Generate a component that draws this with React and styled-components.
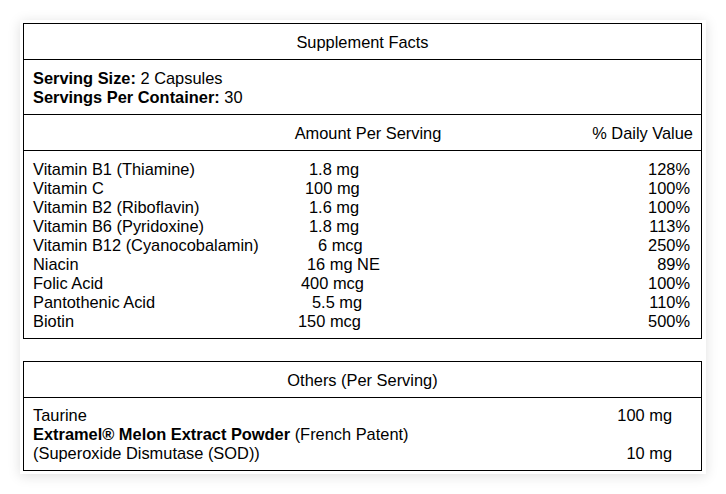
import styled, { createGlobalStyle } from 'styled-components';

const GlobalStyle = createGlobalStyle`
	html, body {
		margin: 0;
		padding: 0;
		background: #ffffff;
	}
	body {
		font-family: 'Liberation Sans', Arial, sans-serif;
		font-size: 16.4px;
		color: #000;
	}
`;

const vitamins = [
	{ name: 'Vitamin B1 (Thiamine)', amount: '1.8 mg', indent: 16, dv: '128%' },
	{ name: 'Vitamin C', amount: '100 mg', indent: 12, dv: '100%' },
	{ name: 'Vitamin B2 (Riboflavin)', amount: '1.6 mg', indent: 16, dv: '100%' },
	{ name: 'Vitamin B6 (Pyridoxine)', amount: '1.8 mg', indent: 16, dv: '113%' },
	{ name: 'Vitamin B12 (Cyanocobalamin)', amount: '6 mcg', indent: 25, dv: '250%' },
	{ name: 'Niacin', amount: '16 mg NE', indent: 14, dv: '89%' },
	{ name: 'Folic Acid', amount: '400 mcg', indent: 8, dv: '100%' },
	{ name: 'Pantothenic Acid', amount: '5.5 mg', indent: 19, dv: '110%' },
	{ name: 'Biotin', amount: '150 mcg', indent: 5, dv: '500%' },
];

const App = () => {
	return (
		<>
			<GlobalStyle />
			<Page>
				<Card>
					<Table>
						<TitleRow>Supplement Facts</TitleRow>
						<Block>
							<Line>
								<b>Serving Size:</b> 2 Capsules
							</Line>
							<Line>
								<b>Servings Per Container:</b> 30
							</Line>
						</Block>
						<HeadRow>
							<span />
							<HeadAmount>Amount Per Serving</HeadAmount>
							<HeadDv>% Daily Value</HeadDv>
						</HeadRow>
						<Block>
							{vitamins.map((v) => (
								<NutrientRow key={v.name}>
									<span>{v.name}</span>
									<Amount $indent={v.indent}>{v.amount}</Amount>
									<Dv>{v.dv}</Dv>
								</NutrientRow>
							))}
						</Block>
					</Table>

					<Table $spaced>
						<TitleRow>Others (Per Serving)</TitleRow>
						<OtherBlock>
							<OtherRow>
								<span>Taurine</span>
								<OtherValue>100 mg</OtherValue>
							</OtherRow>
							<OtherRow>
								<span>
									<b>Extramel® Melon Extract Powder</b> (French Patent)
								</span>
								<OtherValue />
							</OtherRow>
							<OtherRow>
								<span>(Superoxide Dismutase (SOD))</span>
								<OtherValue>10 mg</OtherValue>
							</OtherRow>
						</OtherBlock>
					</Table>
				</Card>
			</Page>
		</>
	);
};

const Page = styled.div`
	padding: 20px;
`;

const Card = styled.div`
	background: #fff;
	padding: 3px 4px 3px 3px;
	box-shadow: 0 2px 12px rgba(0, 0, 0, 0.13);
`;

const Table = styled.div`
	border: 1px solid #000;
	margin-top: ${(p) => (p.$spaced ? '22px' : '0')};
	line-height: 19px;
`;

const TitleRow = styled.div`
	text-align: center;
	padding: 9px 9px 7px;
	border-bottom: 1px solid #000;
`;

const Block = styled.div`
	padding: 9px 11px 7px 9px;
	border-bottom: 1px solid #000;

	&:last-child {
		border-bottom: none;
	}

	b {
		font-weight: 700;
	}
`;

const Line = styled.div`
	white-space: nowrap;
`;

const HeadRow = styled.div`
	display: grid;
	grid-template-columns: 260px 150px 1fr;
	padding: 9px 8px 7px 9px;
	border-bottom: 1px solid #000;
`;

const HeadAmount = styled.span`
	text-align: center;
	white-space: nowrap;
`;

const HeadDv = styled.span`
	text-align: right;
`;

const NutrientRow = styled.div`
	display: grid;
	grid-template-columns: 260px 150px 1fr;
	white-space: nowrap;
`;

const Amount = styled.span`
	padding-left: ${(p) => p.$indent}px;
`;

const Dv = styled.span`
	text-align: right;
`;

const OtherBlock = styled.div`
	padding: 8px 29px 7px 9px;

	b {
		font-weight: 700;
	}
`;

const OtherRow = styled.div`
	display: flex;
	justify-content: space-between;
	white-space: nowrap;
`;

const OtherValue = styled.span`
	text-align: right;
`;

export default App;
